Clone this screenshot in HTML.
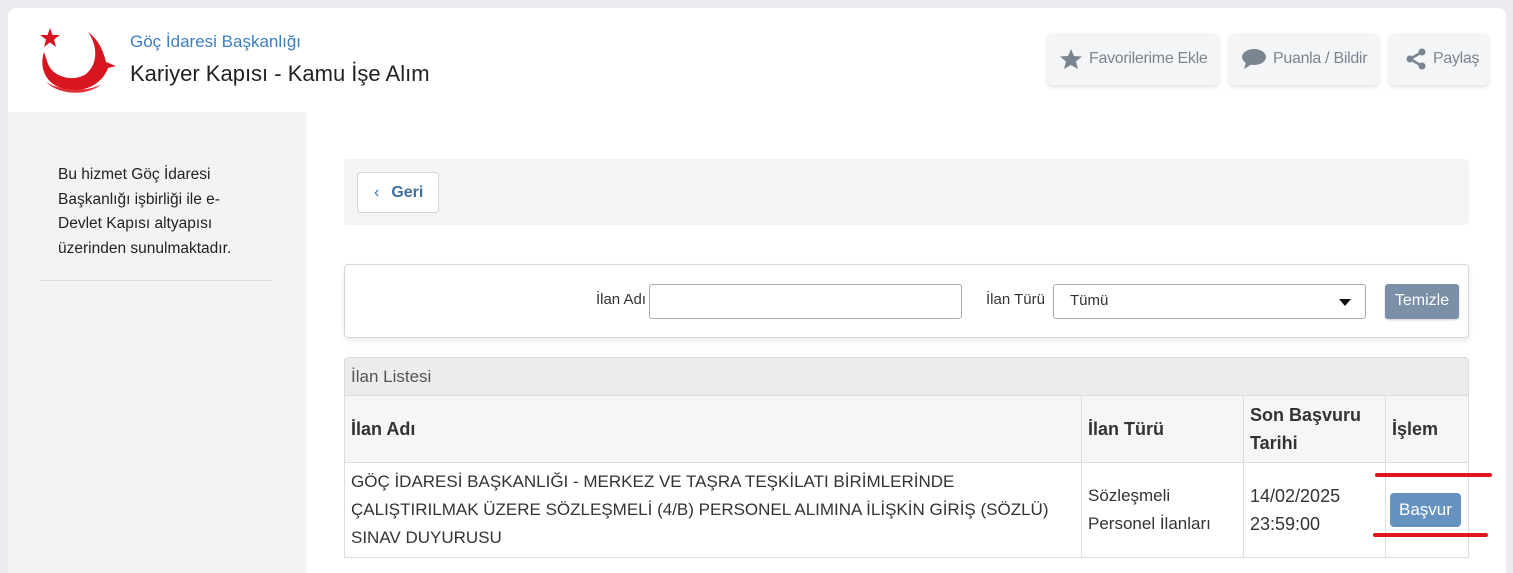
<!DOCTYPE html>
<html><head><meta charset="utf-8"><style>
*{box-sizing:border-box;margin:0;padding:0}
body{width:1513px;height:573px;overflow:hidden;background:#e9ebee;font-family:"Liberation Sans",sans-serif;position:relative;color:#333}
.abs{position:absolute}
.hdr{left:8px;top:8px;width:1498px;height:104px;background:#fff;border-radius:8px 8px 0 0}
.side{left:8px;top:112px;width:299px;height:461px;background:#f2f3f5}
.main{left:307px;top:112px;width:1199px;height:461px;background:#fff}
.hb{top:33px;height:52px;background:#f4f5f7;border-radius:5px;box-shadow:0 2px 4px rgba(0,0,0,.12);color:#7b8591;font-size:16px;display:flex;align-items:center;padding-left:12px;letter-spacing:-.3px}
.hb svg{margin-right:6px}
td,th{border:1px solid #ddd;vertical-align:middle;padding:0 6px;text-align:left}
</style></head><body>
<div class="abs hdr"></div>
<svg class="abs" style="left:38px;top:26px" width="82" height="70" viewBox="0 0 82 70">
<polygon points="12,2 14.5,9 22,9 16,13.5 18,21 12,16.5 6,21 8,13.5 2,9 9.5,9" fill="#d8161f"/>
<path d="M6,26 C0,44 10,62 32,64 C52,66 66,54 70,42 L78,40 L68,36 C64,20 58,12 50,6 C60,20 60,38 48,48 C36,56 16,52 10,38 Z" fill="#d8161f"/>
<path d="M8,56 C22,70 50,70 64,58 C50,66 24,66 8,56Z" fill="#e03038"/>
</svg>
<div class="abs" style="left:130px;top:32px;font-size:17px;color:#3c7fc0">Göç İdaresi Başkanlığı</div>
<div class="abs" style="left:130px;top:61px;font-size:22px;color:#222">Kariyer Kapısı - Kamu İşe Alım</div>
<div class="abs hb" style="left:1047px;width:172px"><svg width="24" height="22" viewBox="0 0 24 22"><polygon points="12,1 15,8 23,8.5 17,13.5 19,21 12,17 5,21 7,13.5 1,8.5 9,8" fill="#7b8591"/></svg>Favorilerime Ekle</div>
<div class="abs hb" style="left:1229px;width:150px"><svg width="26" height="22" viewBox="0 0 26 22"><ellipse cx="13" cy="9" rx="12" ry="8" fill="#7b8591"/><path d="M5,14 L3,21 L11,16Z" fill="#7b8591"/></svg>Puanla / Bildir</div>
<div class="abs hb" style="left:1389px;width:100px;padding-left:16px"><svg width="22" height="22" viewBox="0 0 22 22"><circle cx="17" cy="4" r="3.5" fill="#7b8591"/><circle cx="5" cy="11" r="3.5" fill="#7b8591"/><circle cx="17" cy="18" r="3.5" fill="#7b8591"/><path d="M17,4 L5,11 L17,18" stroke="#7b8591" stroke-width="2.5" fill="none"/></svg>Paylaş</div>
<div class="abs side"></div>
<div class="abs main"></div>
<div class="abs" style="left:58px;top:163px;width:220px;font-size:15.5px;line-height:24.5px;color:#222">Bu hizmet Göç İdaresi<br>Başkanlığı işbirliği ile e-<br>Devlet Kapısı altyapısı<br>üzerinden sunulmaktadır.</div>
<div class="abs" style="left:40px;top:280px;width:233px;height:1px;background:#dcdee2"></div>
<div class="abs" style="left:344px;top:159px;width:1125px;height:66px;background:#f3f4f6;border-radius:4px"></div>
<div class="abs" style="left:357px;top:172px;width:82px;height:41px;background:#fff;border:1px solid #d4d6d9;border-radius:4px;color:#3f6f9f;font-weight:bold;font-size:16px;line-height:39px;padding-left:16px"><span style="font-weight:normal;margin-right:12px">‹</span>Geri</div>
<div class="abs" style="left:344px;top:264px;width:1125px;height:74px;border:1px solid #d8d8d8;border-radius:4px;box-shadow:0 3px 6px rgba(0,0,0,.08);background:#fff"></div>
<div class="abs" style="left:560px;top:291px;width:86px;text-align:right;font-size:15px">İlan Adı</div>
<div class="abs" style="left:649px;top:284px;width:313px;height:35px;border:1px solid #aaa;border-radius:3px"></div>
<div class="abs" style="left:986px;top:291px;font-size:15px">İlan Türü</div>
<div class="abs" style="left:1053px;top:284px;width:313px;height:35px;border:1px solid #aaa;border-radius:3px;font-size:15px;padding:7px 16px">Tümü<span style="position:absolute;right:14px;top:14px;border:6px solid transparent;border-top:7px solid #111;border-bottom:0"></span></div>
<div class="abs" style="left:1385px;top:284px;width:74px;height:35px;background:#7b8fa6;border-radius:3px;color:#fff;font-size:16px;text-align:center;line-height:34px;box-shadow:0 1px 2px rgba(0,0,0,.2)">Temizle</div>
<div class="abs" style="left:344px;top:357px;width:1125px;height:39px;background:#ececec;border:1px solid #ddd;border-radius:4px 4px 0 0;font-size:17px;color:#555;padding:9px 6px">İlan Listesi</div>
<table class="abs" style="left:344px;top:395px;width:1125px;border-collapse:collapse;font-size:17px;color:#333">
<tr style="height:67px;background:#f5f6f6;font-size:18px"><th style="width:737px">İlan Adı</th><th style="width:162px">İlan Türü</th><th style="width:142px;line-height:28px">Son Başvuru Tarihi</th><th>İşlem</th></tr>
<tr style="height:95px;line-height:28px"><td>GÖÇ İDARESİ BAŞKANLIĞI - MERKEZ VE TAŞRA TEŞKİLATI BİRİMLERİNDE ÇALIŞTIRILMAK ÜZERE SÖZLEŞMELİ (4/B) PERSONEL ALIMINA İLİŞKİN GİRİŞ (SÖZLÜ) SINAV DUYURUSU</td><td>Sözleşmeli Personel İlanları</td><td style="font-size:18px">14/02/2025 23:59:00</td><td style="padding-left:4px"><span style="display:inline-block;background:#6592bf;color:#fff;border-radius:4px;padding:0 9px;line-height:34px;font-size:17px">Başvur</span></td></tr>
</table>
<div class="abs" style="left:1375px;top:473px;width:117px;height:4px;background:#e0161e;border-radius:2px"></div>
<div class="abs" style="left:1373px;top:533px;width:115px;height:4px;background:#e0161e;border-radius:2px"></div>
</body></html>
